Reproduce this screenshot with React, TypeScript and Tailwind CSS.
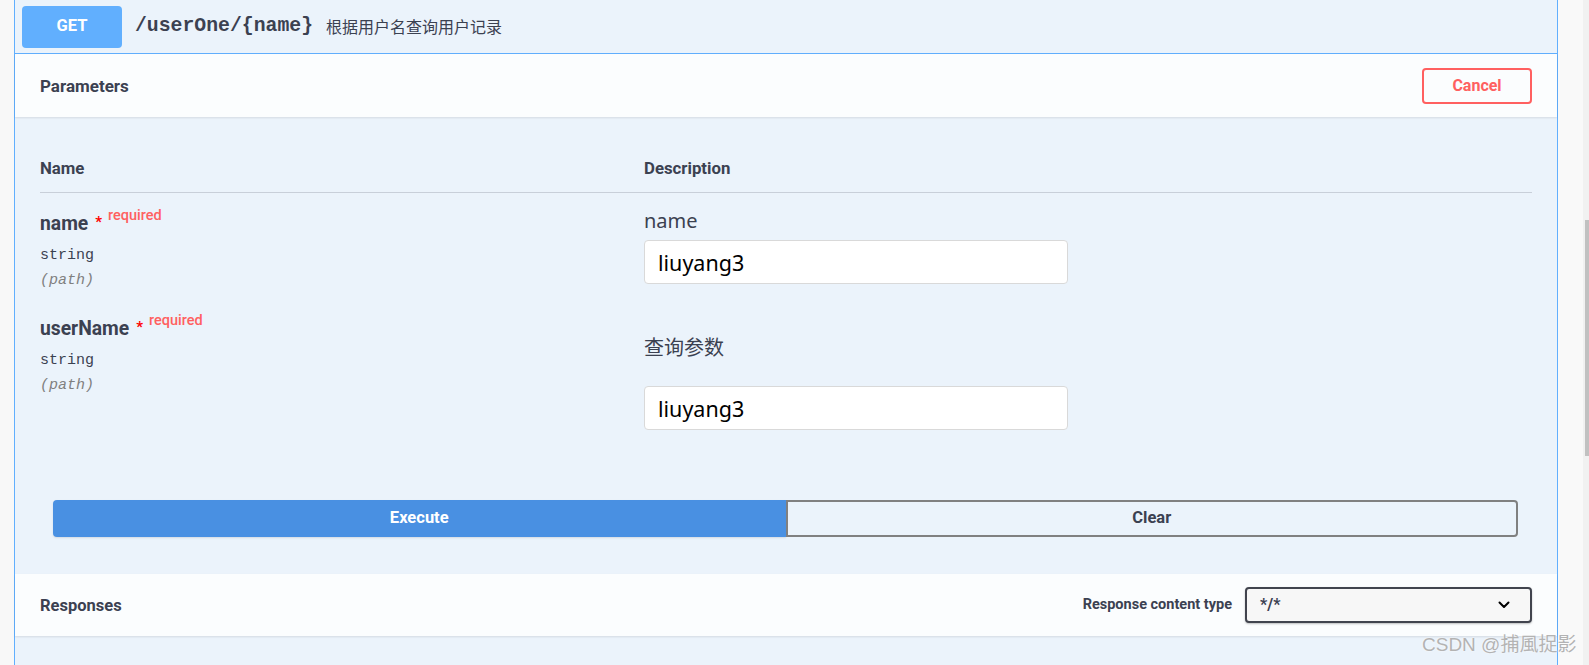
import React from "react";

const titleFont = "font-['Roboto','Noto_Sans',sans-serif]";
const monoFont = "font-['Liberation_Mono','DejaVu_Sans_Mono',monospace]";
const cjkFont = "font-['Noto_Sans','Noto_Sans_CJK_SC',sans-serif]";

interface ParamRowProps {
  name: string;
  label: string;
  value: string;
  cjk?: boolean;
}

function ParamRow({ name, label, value, cjk }: ParamRowProps) {
  return (
    <div className="flex">
      <div className="w-[604px] shrink-0 pt-[19px]">
        <div className={`flex h-[24px] items-center ${titleFont} text-[19.3px] font-bold text-[#3b4151]`}>
          <span>{name}</span>
          <span className="relative -top-[2px] ml-[7px] text-[15px] font-bold text-[#ff0000]">*</span>
          <span className="relative -top-[8px] ml-[6px] text-[14.5px] font-medium text-[#ff6060]">
            required
          </span>
        </div>
        <div className={`mt-[10px] h-[20px] leading-[20px] ${monoFont} text-[15px] text-[#3b4151]`}>string</div>
        <div className={`mt-[5px] h-[20px] leading-[20px] ${monoFont} text-[15px] italic text-[#808080]`}>(path)</div>
      </div>
      <div className={`flex-1 ${cjk ? "pt-[38px] pb-[14px]" : "pt-[16px] pb-[14px]"}`}>
        <div className={`h-[24px] leading-[24px] ${cjkFont} text-[20px] text-[#3b4151]`}>{label}</div>
        <input
          readOnly
          value={value}
          className={`${cjk ? "mt-[26px]" : "mt-[7px]"} block h-[44px] w-[424px] rounded-[4px] border border-[#d9d9d9] bg-white px-[13px] ${cjkFont} text-[21.5px] text-black outline-none`}
        />
      </div>
    </div>
  );
}

export default function App() {
  return (
    <div className="relative flex h-[665px] w-full overflow-hidden bg-[#f8f8f8]">
      <div className="w-[14px] shrink-0 bg-[#f8f8f8]" />

      <div className="flex w-[1544px] shrink-0 flex-col border-x border-[#61affe] bg-[#ebf3fb]">
        {/* summary */}
        <div className="flex h-[54px] shrink-0 items-center border-b border-[#61affe] pl-[7px]">
          <div
            className={`flex h-[42px] w-[100px] items-center justify-center rounded-[4px] bg-[#61affe] ${titleFont} text-[16.5px] font-bold text-white`}
          >
            GET
          </div>
          <span className={`ml-[13px] ${monoFont} text-[19.8px] font-semibold text-[#3b4151]`}>/userOne/{"{name}"}</span>
          <span className={`ml-[13px] ${cjkFont} text-[16px] text-[#3b4151]`}>根据用户名查询用户记录</span>
        </div>

        {/* parameters header */}
        <div className="flex h-[63px] shrink-0 items-center justify-between bg-white/80 px-[25px] shadow-[0_1px_2px_rgba(0,0,0,0.1)]">
          <h4 className={`pt-[2px] ${titleFont} text-[17px] font-bold text-[#3b4151]`}>Parameters</h4>
          <button
            className={`h-[36px] w-[110px] rounded-[4px] border-2 border-[#ff6060] bg-transparent ${titleFont} text-[16px] font-bold text-[#ff6060]`}
          >
            Cancel
          </button>
        </div>

        {/* parameters table */}
        <div className="px-[25px] pt-[26px]">
          <div className={`flex h-[50px] items-center border-b border-[#c8cfd9] pt-[2px] ${titleFont} text-[16.8px] font-bold text-[#3b4151]`}>
            <div className="w-[604px] shrink-0">Name</div>
            <div>Description</div>
          </div>
          <ParamRow name="name" label="name" value="liuyang3" />
          <ParamRow name="userName" label="查询参数" value="liuyang3" cjk />
        </div>

        {/* execute */}
        <div className="mt-[56px] grid grid-cols-2 pl-[38px] pr-[39px]">
          <button
            className={`h-[37px] rounded-l-[4px] bg-[#4990e2] ${titleFont} text-[16.5px] font-bold text-white shadow-[0_1px_2px_rgba(0,0,0,0.1)]`}
          >
            Execute
          </button>
          <button
            className={`h-[37px] rounded-r-[4px] border-2 border-[#808080] bg-transparent ${titleFont} text-[16.5px] font-bold text-[#3b4151]`}
          >
            Clear
          </button>
        </div>

        {/* responses header */}
        <div className="mt-[37px] flex h-[62px] shrink-0 items-center justify-between bg-white/80 px-[25px] shadow-[0_1px_2px_rgba(0,0,0,0.1)]">
          <h4 className={`pt-[2px] ${titleFont} text-[16.5px] font-bold text-[#3b4151]`}>Responses</h4>
          <div className="flex items-center">
            <span className={`${titleFont} text-[14.5px] font-bold text-[#3b4151]`}>Response content type</span>
            <div className="ml-[13px] flex h-[36px] w-[287px] items-center justify-between rounded-[4px] border-2 border-[#41444e] bg-[#f7f7f7] pl-[13px] pr-[20px] shadow-[0_1px_2px_rgba(0,0,0,0.25)]">
              <span className={`${titleFont} text-[16px] font-bold text-[#3b4151]`}>*/*</span>
              <svg width="12" height="8" viewBox="0 0 12 8" fill="none">
                <path d="M1.5 1.5L6 6l4.5-4.5" stroke="#000" strokeWidth="2" strokeLinecap="round" strokeLinejoin="round" />
              </svg>
            </div>
          </div>
        </div>
      </div>

      {/* right gutter + scrollbar */}
      <div className="flex flex-1 justify-end bg-[#f9f9f9]">
        <div className="w-[6px] bg-[#f1f1f1] pt-[220px]">
          <div className="ml-auto h-[236px] w-[4px] bg-[#c1c1c1]" />
        </div>
      </div>

      {/* watermark */}
      <div
        className="absolute left-[1422px] top-[632px] font-['Liberation_Sans','Noto_Sans_CJK_SC',sans-serif] text-[19px] leading-[25px] text-[#b3b3b3] [text-shadow:0_0_2px_#fff]"
      >
        CSDN @捕風捉影
      </div>
    </div>
  );
}
